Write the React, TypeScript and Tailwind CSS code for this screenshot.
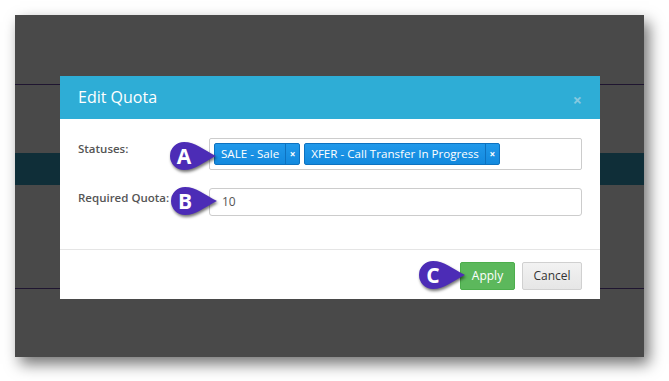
import React from "react";

function Marker({ letter, className }: { letter: string; className: string }) {
  return (
    <div className={"absolute w-[48px] h-[30px] " + className}>
      <svg width="48" height="30" viewBox="0 0 48 30" className="absolute left-0 top-0" style={{ filter: "drop-shadow(1px 2px 1.5px rgba(0,0,0,0.55))" }}>
        <path d="M14 1 C25 1 34 9 46 15 C34 21 25 29 14 29 A14 14 0 0 1 14 1 Z" fill="#4c2cb6" />
      </svg>
      <span className="absolute left-0 top-0 w-[28px] h-[30px] flex items-center justify-center text-white text-[21px] font-bold leading-none" style={{ fontFamily: "'Open Sans', sans-serif" }}>
        {letter}
      </span>
    </div>
  );
}

function Tag({ label }: { label: string }) {
  return (
    <div className="flex h-[22px] rounded-[2px] border border-[#0d72c0] bg-gradient-to-b from-[#2199ea] to-[#1289de] text-white text-[11.6px] leading-none">
      <span className="flex items-center pl-[6px] pr-[6px]">{label}</span>
      <span className="flex items-center justify-center w-[14px] border-l border-[#0d72c0] text-[10px] font-bold">×</span>
    </div>
  );
}

export default function App() {
  return (
    <div className="relative w-[669px] h-[381px] bg-white overflow-hidden" style={{ fontFamily: "'Open Sans', sans-serif" }}>
      <div className="ml-[15px] mt-[15px] w-[629px] h-[342px] bg-[#494949] relative shadow-[5px_7px_14px_rgba(0,0,0,0.55)]">
        <div className="h-[69px]" />
        <div className="h-px bg-[#1f1530]" />
        <div className="h-[68px]" />
        <div className="h-[32px] bg-[#0f2e38]" />
        <div className="h-[103px]" />
        <div className="h-px bg-[#1f1530]" />

        <div className="absolute left-[45px] top-[61px] w-[540px] bg-white">
          <div className="h-[43px] bg-[#2eadd6] flex items-center justify-between pl-[18px] pr-[18px]">
            <span className="text-white text-[16px] mt-[-2px]">Edit Quota</span>
            <span className="text-[#86c9e0] text-[16px] font-bold mt-[4px]">×</span>
          </div>
          <div className="h-[130px] pl-[18px] pr-[18px] pt-[19px] flex flex-col gap-[18px]">
            <div className="flex">
              <div className="w-[131px] text-[11.5px] font-semibold text-[#555] pt-[2px]">Statuses:</div>
              <div className="flex-1 h-[32px] border border-[#ccc] rounded-[2px] flex items-center gap-[4px] pl-[4px]">
                <Tag label="SALE - Sale" />
                <Tag label="XFER - Call Transfer In Progress" />
              </div>
            </div>
            <div className="flex">
              <div className="w-[131px] text-[11.5px] font-semibold text-[#555] pt-[1px] whitespace-nowrap">Required Quota:</div>
              <div className="flex-1 h-[28px] border border-[#ccc] rounded-[3px] flex items-center pl-[12px] text-[12px] text-[#555]">10</div>
            </div>
          </div>
          <div className="h-[50px] border-t border-[#e5e5e5] flex justify-end items-start pt-[12px] pr-[18px] gap-[7px]">
            <button className="h-[28px] w-[55px] rounded-[2px] bg-[#5cb85c] border border-[#4cae4c] text-white text-[12px]">Apply</button>
            <button className="h-[28px] w-[60px] rounded-[2px] bg-gradient-to-b from-[#f2f2f2] to-[#e6e6e6] border border-[#d0d0d0] text-[#333] text-[12px]">Cancel</button>
          </div>
        </div>
      </div>

      <Marker letter="A" className="left-[170px] top-[141px]" />
      <Marker letter="B" className="left-[171px] top-[186px]" />
      <Marker letter="C" className="left-[419px] top-[260px]" />
    </div>
  );
}
